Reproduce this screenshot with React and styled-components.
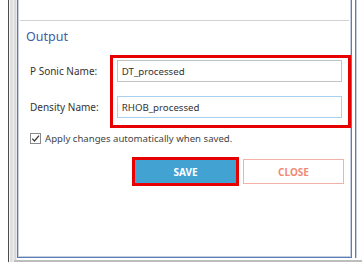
import React from 'react'
import styled, { createGlobalStyle } from 'styled-components'

const GlobalStyle = createGlobalStyle`
  html, body {
    margin: 0;
    padding: 0;
    background: #ffffff;
  }
  body {
    font-family: "Noto Sans", "Open Sans", sans-serif;
    color: #333333;
  }
`

const Screen = styled.div`
  display: flex;
  width: 362px;
  height: 274px;
  overflow: hidden;
  background: #ffffff;
`

const Gutter = styled.div`
  width: 8px;
`

const Rail = styled.div`
  width: 1px;
  height: 262px;
  background: #4d4d4d;
`

const Track = styled.div`
  width: 8px;
  height: 262px;
  background: linear-gradient(to right, #ffffff 0%, #d8d8d8 25%, #ececec 55%, #d4d4d4 80%, #f4f4f4 100%);
`

const Column = styled.div`
  flex: 1;
  display: flex;
  flex-direction: column;
`

const PanelRow = styled.div`
  display: flex;
  gap: 3px;
  height: 258px;
`

const Panel = styled.div`
  position: relative;
  width: 335px;
  box-sizing: border-box;
  border: 1px solid #5d7cb3;
  border-top: none;
  box-shadow: inset 1px 0 0 #c5cfe2, inset -1px 0 0 #c5cfe2, inset 0 -1px 0 #c5cfe2;
  display: flex;
  flex-direction: column;
`

const NextPanel = styled.div`
  flex: 1;
  border-left: 1px solid #5d7cb3;
  box-shadow: inset 1px 0 0 #c5cfe2;
`

const BottomLine = styled.div`
  height: 2px;
  margin-top: 2px;
  margin-left: -3px;
  background: #bdbdbd;
`

const Separator = styled.div`
  height: 1px;
  margin: 20px 2px 0;
  background: #d2d2d2;
`

const Title = styled.div`
  margin: 7px 0 0 8px;
  font-size: 12.5px;
  line-height: 18px;
  color: #3e5ea6;
`

const Form = styled.div`
  display: flex;
  margin: 9px 0 0 12px;
`

const LabelColumn = styled.div`
  width: 80px;
  display: flex;
  flex-direction: column;
  gap: 14px;
  padding-top: 5px;
`

const Label = styled.div`
  height: 22px;
  display: flex;
  align-items: center;
  font-size: 10px;
  color: #333333;
`

const Highlight = styled.div`
  width: 242px;
  box-sizing: border-box;
  border: 3px solid #e60000;
  padding: 2px 6px 7px 4px;
  display: flex;
  flex-direction: column;
  gap: 14px;
`

const Field = styled.div`
  height: 22px;
  box-sizing: border-box;
  border: 1px solid ${p => (p.$focused ? '#a9d1f1' : '#c2c2c2')};
  display: flex;
  align-items: center;
  padding-left: 4px;
  font-size: 9.7px;
  color: #333333;
`

const CheckRow = styled.div`
  display: flex;
  align-items: center;
  gap: 4px;
  margin: 4px 0 0 12px;
  font-size: 9.6px;
  color: #444444;
`

const Box = styled.span`
  width: 11px;
  height: 11px;
  box-sizing: border-box;
  border: 1px solid #8a8a8a;
  display: flex;
  align-items: center;
  justify-content: center;
`

const Actions = styled.div`
  display: flex;
  justify-content: flex-end;
  align-items: center;
  gap: 7px;
  margin: 14px 7px 0 0;
`

const Button = styled.div`
  width: 101px;
  box-sizing: border-box;
  display: flex;
  align-items: center;
  justify-content: center;
  font-size: 10px;
  font-weight: 700;
  ${p => p.$primary
    ? `
      height: 23px;
      background: #42a2d2;
      color: #ffffff;
      outline: 3px solid #e60000;
    `
    : `
      height: 25px;
      border: 1px solid #f3b2a6;
      background: #ffffff;
      color: #f08a78;
    `}
`

export default function App () {
  return (
    <>
      <GlobalStyle />
      <Screen>
        <Gutter />
        <Rail />
        <Track />
        <Column>
          <PanelRow>
            <Panel>
              <Separator />
              <Title>Output</Title>
              <Form>
                <LabelColumn>
                  <Label>P Sonic Name:</Label>
                  <Label>Density Name:</Label>
                </LabelColumn>
                <Highlight>
                  <Field>DT_processed</Field>
                  <Field $focused>RHOB_processed</Field>
                </Highlight>
              </Form>
              <CheckRow>
                <Box>
                  <svg width='9' height='9' viewBox='0 0 9 9'>
                    <path d='M1.2 4.6 L3.5 7 L8 1.6' fill='none' stroke='#3a3a3a' strokeWidth='1.3' />
                  </svg>
                </Box>
                Apply changes automatically when saved.
              </CheckRow>
              <Actions>
                <Button $primary>SAVE</Button>
                <Button>CLOSE</Button>
              </Actions>
            </Panel>
            <NextPanel />
          </PanelRow>
          <BottomLine />
        </Column>
      </Screen>
    </>
  )
}
